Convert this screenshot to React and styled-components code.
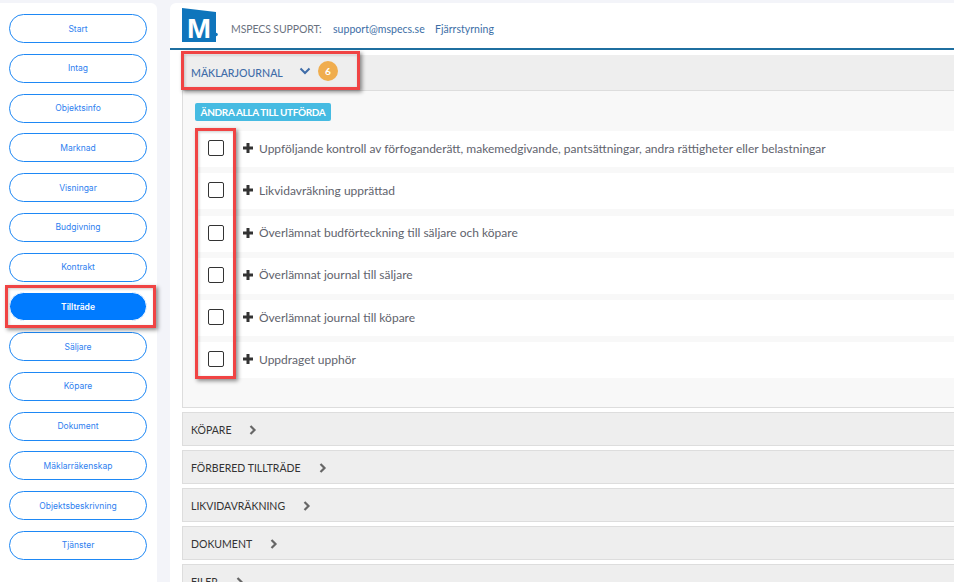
import React from "react";
import styled, { createGlobalStyle } from "styled-components";

const Global = createGlobalStyle`
  html, body { margin: 0; padding: 0; height: 582px; overflow: hidden; background: #f3f4f9; }
  #root { height: 582px; }
  * { box-sizing: border-box; }
`;

const Page = styled.div`
  position: relative;
  display: flex;
  gap: 13px;
  height: 582px;
  padding-top: 3px;
  overflow: hidden;
  font-family: Lato, "Liberation Sans", sans-serif;
`;

const Sidebar = styled.nav`
  flex: 0 0 157px;
  background: #fff;
  border-radius: 0 6px 0 0;
  padding: 11px 10px 0 9px;
  display: flex;
  flex-direction: column;
  gap: 10.75px;
`;

const NavButton = styled.button`
  height: 29px;
  flex: none;
  width: 138px;
  border-radius: 15px;
  border: 1px solid ${(p) => (p.$active ? "#fff" : "#1e88f5")};
  background: ${(p) => (p.$active ? "#007bff" : "#fff")};
  color: ${(p) => (p.$active ? "#fff" : "#2f7ff0")};
  font-family: Inter, Roboto, sans-serif;
  font-size: 8.5px;
  font-weight: ${(p) => (p.$active ? 600 : 400)};
  padding: 0;
`;

const Main = styled.main`
  flex: 1;
  background: #fff;
  border-radius: 6px 0 0 0;
  min-width: 0;
`;

const Header = styled.header`
  height: 47px;
  border-bottom: 2px solid #1f6fa0;
  padding: 5px 0 0 12px;
  display: flex;
  align-items: flex-start;
  font-size: 10.5px;
`;

const Logo = styled.svg`
  width: 38px;
  height: 36px;
  flex: none;
`;

const SupportLabel = styled.span`
  margin: 15px 0 0 11px;
  color: #6b7280;
  width: 102px;
  letter-spacing: -0.1px;
`;

const SupportLink = styled.span`
  margin-top: 15px;
  color: #3c6ea6;
  width: 102px;
  letter-spacing: 0.03px;
`;

const Content = styled.div`
  padding: 5px 0 0 12px;
  width: 784px;
  display: flex;
  flex-direction: column;
`;

const OpenHead = styled.div`
  height: 36px;
  background: #eee;
  border-bottom: 1px solid #ddd;
  display: flex;
  align-items: center;
  padding-left: 9px;
  color: #3f6ca8;
  font-size: 10.6px;
  font-weight: 500;
`;

const HeadTitle = styled.span`
  width: 108px;
`;

const Badge = styled.span`
  width: 20px;
  height: 20px;
  border-radius: 50%;
  background: #f0ad4e;
  color: #fff;
  font-size: 10px;
  font-weight: 700;
  display: flex;
  align-items: center;
  justify-content: center;
  margin-left: 7px;
  margin-top: -3px;
`;

const Body = styled.div`
  height: 317px;
  background: #f8f8f8;
  border-left: 1px solid #ddd;
  border-bottom: 1px solid #ddd;
  padding: 12px 0 0 14px;
`;

const AllDone = styled.button`
  display: block;
  width: 136px;
  height: 18px;
  border: 0;
  border-radius: 2px;
  background: #46bbe2;
  color: #fff;
  font-family: Lato, sans-serif;
  font-size: 10px;
  font-weight: 700;
  letter-spacing: -0.35px;
  padding: 0;
  margin: 0 0 10px -2px;
  white-space: nowrap;
`;

const Rows = styled.div`
  display: flex;
  flex-direction: column;
  gap: 6.25px;
`;

const Row = styled.div`
  height: 36px;
  background: #fff;
  display: flex;
  align-items: center;
  padding: 0 0 2px 11px;
  color: #5f636d;
  font-size: 12px;
`;

const Check = styled.span`
  width: 16px;
  height: 16px;
  border: 1px solid #333;
  border-radius: 2px;
  background: #fff;
  margin-right: 19px;
  flex: none;
`;

const Plus = styled.svg`
  width: 10px;
  height: 10px;
  margin-right: 6px;
  flex: none;
`;

const Section = styled.div`
  height: 34px;
  margin-top: 4px;
  background: #eee;
  border: 1px solid #ddd;
  border-right: 0;
  display: flex;
  align-items: center;
  gap: 18px;
  padding: 2px 0 0 8px;
  color: #333;
  font-size: 10.5px;
  flex: none;
`;

const Chevron = styled.svg`
  width: 8px;
  height: 10px;
  flex: none;
`;

const DownChevron = styled.svg`
  width: 12px;
  height: 8px;
  flex: none;
  margin-top: -3px;
`;

const Marker = styled.div`
  position: absolute;
  border: 3px solid #f04444;
  box-shadow: 2px 2px 4px rgba(0, 0, 0, 0.45), inset 1px 1px 3px rgba(0, 0, 0, 0.2);
  pointer-events: none;
  left: ${(p) => p.$x}px;
  top: ${(p) => p.$y}px;
  width: ${(p) => p.$w}px;
  height: ${(p) => p.$h}px;
`;

const nav = ["Start", "Intag", "Objektsinfo", "Marknad", "Visningar", "Budgivning", "Kontrakt", "Tillträde", "Säljare", "Köpare", "Dokument", "Mäklarräkenskap", "Objektsbeskrivning", "Tjänster"];
const tasks = [
  "Uppföljande kontroll av förfoganderätt, makemedgivande, pantsättningar, andra rättigheter eller belastningar",
  "Likvidavräkning upprättad",
  "Överlämnat budförteckning till säljare och köpare",
  "Överlämnat journal till säljare",
  "Överlämnat journal till köpare",
  "Uppdraget upphör",
];
const sections = ["KÖPARE", "FÖRBERED TILLTRÄDE", "LIKVIDAVRÄKNING", "DOKUMENT", "FILER"];

export default function App() {
  return (
    <>
      <Global />
      <Page>
        <Sidebar>
          {nav.map((n) => (
            <NavButton key={n} $active={n === "Tillträde"}>{n}</NavButton>
          ))}
        </Sidebar>
        <Main>
          <Header>
            <Logo viewBox="0 0 38 36">
              <polygon points="0,0 34,4 34,34 0,34" fill="#0f75bc" />
              <text x="5" y="30" fill="#fff" fontFamily="Liberation Sans" fontWeight="700" fontSize="28" textLength="24" lengthAdjust="spacingAndGlyphs">M</text>
              <circle cx="34" cy="26.5" r="1.8" fill="#0f75bc" />
            </Logo>
            <SupportLabel>MSPECS SUPPORT:</SupportLabel>
            <SupportLink>support@mspecs.se</SupportLink>
            <SupportLink>Fjärrstyrning</SupportLink>
          </Header>
          <Content>
            <OpenHead>
              <HeadTitle>MÄKLARJOURNAL</HeadTitle>
              <DownChevron viewBox="0 0 12 8">
                <path d="M1.5 1.5 L6 6 L10.5 1.5" fill="none" stroke="#3f6ca8" strokeWidth="2" />
              </DownChevron>
              <Badge>6</Badge>
            </OpenHead>
            <Body>
              <AllDone>ÄNDRA ALLA TILL UTFÖRDA</AllDone>
              <Rows>
                {tasks.map((t) => (
                  <Row key={t}>
                    <Check />
                    <Plus viewBox="0 0 10 10">
                      <path d="M5 0 V10 M0 5 H10" stroke="#333" strokeWidth="3" />
                    </Plus>
                    {t}
                  </Row>
                ))}
              </Rows>
            </Body>
            {sections.map((s) => (
              <Section key={s}>
                {s}
                <Chevron viewBox="0 0 8 10">
                  <path d="M1.5 1 L5.5 5 L1.5 9" fill="none" stroke="#666" strokeWidth="2.2" />
                </Chevron>
              </Section>
            ))}
          </Content>
        </Main>
        <Marker $x={181} $y={51} $w={179} $h={39} />
        <Marker $x={195} $y={128} $w={41} $h={251} />
        <Marker $x={5} $y={285} $w={151} $h={43} />
      </Page>
    </>
  );
}
